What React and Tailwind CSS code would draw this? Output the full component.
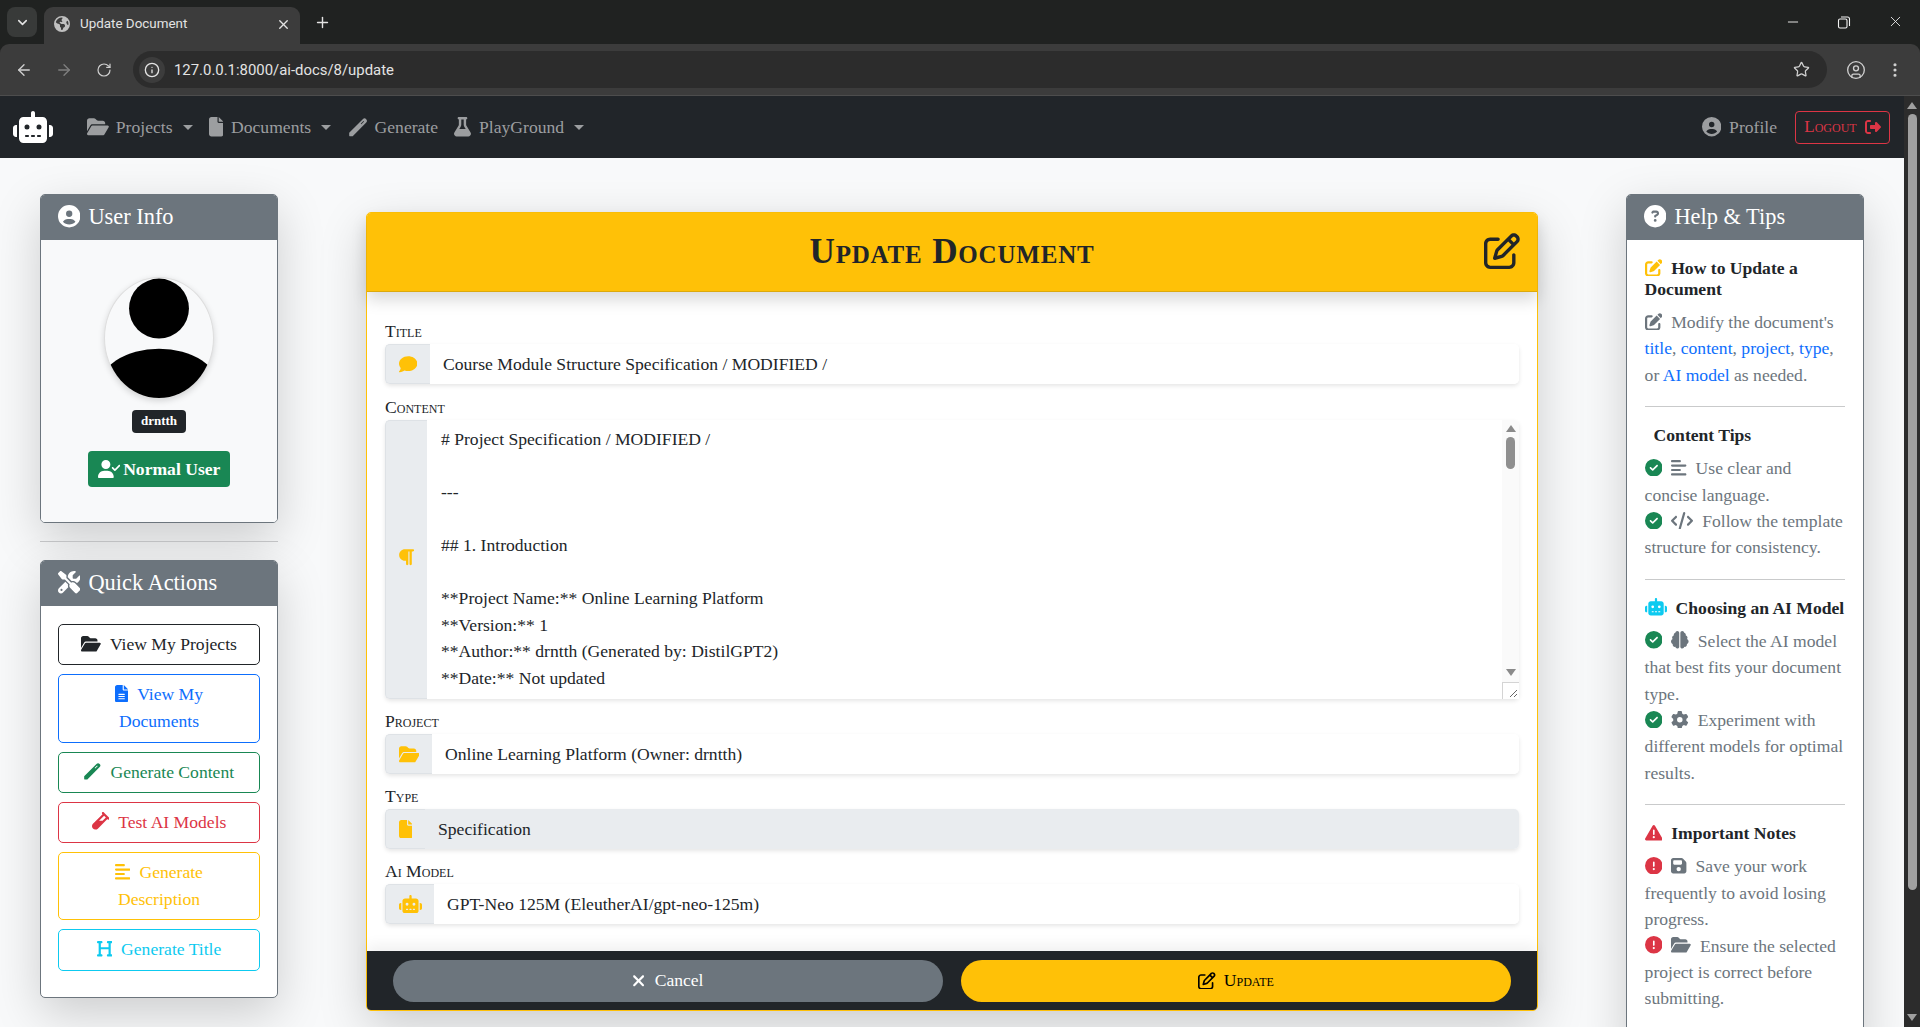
import React from 'react';
import clsx from 'clsx';
import { ArrowLeft, ArrowRight, RotateCw, Star, X, Plus, Minus, ChevronDown, Info, CircleUser, EllipsisVertical } from 'lucide-react';
import {
    FaRobot, FaFolderOpen, FaFile, FaFileLines, FaFlask, FaCircleUser, FaRightFromBracket,
    FaScrewdriverWrench, FaUserCheck, FaVial, FaAlignLeft, FaHeading, FaCircleQuestion, FaPenToSquare,
    FaRegPenToSquare, FaCircleCheck, FaCode, FaBrain, FaGear, FaTriangleExclamation, FaCircleExclamation,
    FaFloppyDisk, FaComment, FaParagraph, FaXmark, FaEarthAmericas,
} from 'react-icons/fa6';

// the pen in the reference is a plain rod with a slit, no package has it
function PenRod({ className }) {
    return (
        <svg viewBox="0 0 20 20" fill="currentColor" fillRule="evenodd" className={className}>
            <path d="M0.2 16.2L14.2 2.2Q16 .4 17.8 2.2Q19.6 4 17.8 5.8L3.8 19.8L0.6 19.8L0.2 19.4ZM12.1 6.9L14.9 4.1L15.5 4.7L12.7 7.5Z" />
        </svg>
    );
}

// glyph widths, the svg box has to follow them or wide icons come out small
const iconWidths = new Map([
    [FaFolderOpen, 'w-[1.125em]'],
    [FaRobot, 'w-[1.25em]'],
    [FaFile, 'w-[.75em]'],
    [FaFileLines, 'w-[.75em]'],
    [FaFlask, 'w-[.875em]'],
    [FaUserCheck, 'w-[1.25em]'],
    [FaAlignLeft, 'w-[.875em]'],
    [FaHeading, 'w-[.875em]'],
    [FaCode, 'w-[1.25em]'],
    [FaFloppyDisk, 'w-[.875em]'],
    [FaParagraph, 'w-[.875em]'],
    [FaXmark, 'w-[.75em]'],
]);

function Ic({ icon: Icon, className }) {
    return <Icon className={clsx('inline-block h-[1em] align-[-0.125em]', iconWidths.get(Icon) || 'w-[1em]', className)} />;
}

function BrowserBar() {
    return (
        <div className="h-[96px] shrink-0 bg-[#202221] flex flex-col font-['Roboto',sans-serif]">
            <div className="h-[44px] flex items-end pl-[7px] pr-[6px] relative">
                <div className="w-[30px] h-[30px] mb-[7px] rounded-lg bg-[#383a39] flex items-center justify-center text-[#e3e3e3]">
                    <ChevronDown size={15} strokeWidth={2.5} />
                </div>
                <div className="ml-[7px] w-[256px] h-[37px] bg-[#3c3c3c] rounded-t-[9px] flex items-center pl-[10px] pr-[9px] pb-[3px] text-[13.4px] text-[#e3e3e3]">
                    <FaEarthAmericas className="w-4 h-4 text-[#c0c0c0]" />
                    <span className="ml-[10px] flex-1">Update Document</span>
                    <X size={15} strokeWidth={2.2} />
                </div>
                <div className="ml-[14px] mb-[13px] text-[#e3e3e3]"><Plus size={17} strokeWidth={2} /></div>
                <div className="ml-auto mb-[14px] flex items-center gap-[35px] pr-[10px] text-[#f2f2f2]">
                    <Minus size={16} strokeWidth={1.4} />
                    <svg width="16" height="16" viewBox="0 0 16 16" fill="none" stroke="currentColor" strokeWidth="1.1">
                        <rect x="2.5" y="5" width="8.5" height="9" rx="1.5" />
                        <path d="M5 3h6.5A2 2 0 0 1 13.5 5v7" />
                    </svg>
                    <X size={17} strokeWidth={1.2} />
                </div>
            </div>
            <div className="h-[52px] bg-[#3c3c3c] rounded-t-[9px] border-b border-[#4d4d4d] flex items-center text-[#d0d0d0]">
                <div className="w-[133px] flex items-center pl-[15px] gap-[22px]">
                    <ArrowLeft size={18} strokeWidth={1.8} />
                    <ArrowRight size={18} strokeWidth={1.8} className="text-[#7f7f7f]" />
                    <RotateCw size={16} strokeWidth={1.8} className="ml-[1px]" />
                </div>
                <div className="w-[1694px] h-[37px] rounded-full bg-[#2c2c2c] flex items-center pl-[6px] pr-[17px]">
                    <div className="w-[26px] h-[26px] rounded-full bg-[#3c3c3c] flex items-center justify-center text-[#e3e3e3]">
                        <Info size={16} strokeWidth={2} />
                    </div>
                    <span className="ml-[9px] pt-[1px] text-[14.9px] text-[#e3e3e3]">127.0.0.1:8000/ai-docs/8/update</span>
                    <Star size={17} strokeWidth={1.8} className="ml-auto" />
                </div>
                <CircleUser size={20} strokeWidth={1.6} className="ml-[19px]" />
                <EllipsisVertical size={18} strokeWidth={2.2} className="ml-[20px]" />
            </div>
        </div>
    );
}

function NavItem({ icon, label, caret, className, iconGap = 'mr-[7px]' }) {
    return (
        <div className={clsx('flex items-center text-[#9c9ea0]', className)}>
            <Ic icon={icon} className={clsx('text-[19.4px]', iconGap)} />
            <span>{label}</span>
            {caret && <span className="ml-[10px] w-0 h-0 border-x-[5px] border-x-transparent border-t-[5px] border-t-[#9c9ea0]"></span>}
        </div>
    );
}

function Navbar() {
    return (
        <div className="h-[62px] shrink-0 bg-[#212529] flex items-center pl-[13px] pr-[14px]">
            <Ic icon={FaRobot} className="text-[32px] text-white" />
            <NavItem icon={FaFolderOpen} label="Projects" caret className="ml-[34px]" />
            <NavItem icon={FaFile} label="Documents" caret className="ml-[16px]" iconGap="mr-[8px]" />
            <NavItem icon={PenRod} label="Generate" className="ml-[18px]" iconGap="mr-[6px]" />
            <NavItem icon={FaFlask} label="PlayGround" caret className="ml-[16px]" iconGap="mr-[8px]" />
            <NavItem icon={FaCircleUser} label="Profile" className="ml-auto" iconGap="mr-[8px]" />
            <div className="ml-[18px] h-[33px] w-[95px] border border-[#dc3545] rounded flex items-center justify-center text-[17px] text-[#dc3545] [font-variant-caps:small-caps]">
                Logout
                <Ic icon={FaRightFromBracket} className="ml-[8px] text-[16px]" />
            </div>
        </div>
    );
}

function SideCard({ icon, title, bodyClass, children }) {
    return (
        <div className="border border-[#6c757d] rounded-[5px] overflow-hidden shadow-[0_16px_48px_rgba(0,0,0,.175)] bg-white">
            <div className="h-[45px] bg-[#6c757d] text-white text-[22.4px] leading-[26px] flex items-center pl-[17px] pb-[2px]">
                <Ic icon={icon} className="mr-[8px] text-[22.4px]" />
                <span>{title}</span>
            </div>
            <div className={bodyClass}>{children}</div>
        </div>
    );
}

function UserInfo() {
    return (
        <SideCard icon={FaCircleUser} title="User Info" bodyClass="bg-[#f8f9fa] h-[282px] flex flex-col items-center pt-[37px]">
            <div className="w-[110px] h-[122px] rounded-[50%] border border-[#dedede] shadow-[0_2px_6px_rgba(0,0,0,.15)] overflow-hidden bg-[#f8f9fa]">
                <svg viewBox="0 0 110 122" className="w-full h-full">
                    <circle cx="55" cy="31" r="30.5" fill="#000" />
                    <ellipse cx="55" cy="113" rx="62" ry="41" fill="#000" />
                </svg>
            </div>
            <div className="mt-[11px] h-[23px] w-[54px] rounded bg-[#212529] text-white text-[13px] font-bold flex items-center justify-center">drntth</div>
            <div className="mt-[18px] h-[36px] w-[142px] rounded bg-[#198754] text-white font-bold flex items-center justify-center">
                <Ic icon={FaUserCheck} className="mr-[3px] text-[18px]" />
                Normal User
            </div>
        </SideCard>
    );
}

const quickActions = [
    { icon: FaFolderOpen, label: 'View My Projects', cls: 'border-[#212529] text-[#212529]' },
    { icon: FaFileLines, label: 'View My Documents', cls: 'border-[#0d6efd] text-[#0d6efd]' },
    { icon: PenRod, label: 'Generate Content', cls: 'border-[#198754] text-[#198754]' },
    { icon: FaVial, label: 'Test AI Models', cls: 'border-[#dc3545] text-[#dc3545]' },
    { icon: FaAlignLeft, label: 'Generate Description', cls: 'border-[#ffc107] text-[#ffc107]' },
    { icon: FaHeading, label: 'Generate Title', cls: 'border-[#0dcaf0] text-[#0dcaf0]' },
];

function QuickActions() {
    return (
        <SideCard icon={FaScrewdriverWrench} title="Quick Actions" bodyClass="px-[17px] pt-[18px] pb-[26px] flex flex-col gap-[9px]">
            {quickActions.map(a => (
                <div key={a.label} className={clsx('border rounded-[5px] px-[17px] py-[6px] text-center leading-[27.2px]', a.cls)}>
                    <Ic icon={a.icon} className="mr-[9px]" />
                    {a.label}
                </div>
            ))}
        </SideCard>
    );
}

function Field({ label, icon, addon, children, className, mb = 'mb-[9px]' }) {
    return (
        <div className={mb}>
            <div className="h-[26px] leading-[26px] text-[#212529] [font-variant-caps:small-caps]">{label}</div>
            <div className="flex h-[40px] rounded-[5px] shadow-[0_2px_4px_rgba(0,0,0,.1)]">
                <div className={clsx('shrink-0 flex items-center justify-center bg-[#e9ecef] border border-r-0 border-[#dee2e6] rounded-l-[5px] text-[#ffc107]', addon)}>
                    <Ic icon={icon} className="text-[18.4px]" />
                </div>
                <div className={clsx('flex-1 flex items-center pl-[13px] rounded-r-[5px] text-[#212529]', className)}>{children}</div>
            </div>
        </div>
    );
}

const contentLines = [
    '# Project Specification / MODIFIED /',
    '',
    '---',
    '',
    '## 1. Introduction',
    '',
    '**Project Name:** Online Learning Platform',
    '**Version:** 1',
    '**Author:** drntth (Generated by: DistilGPT2)',
    '**Date:** Not updated',
];

function ContentField() {
    return (
        <div className="mb-[9px]">
            <div className="h-[26px] leading-[26px] text-[#212529] [font-variant-caps:small-caps]">Content</div>
            <div className="flex h-[279px] rounded-[5px] shadow-[0_2px_4px_rgba(0,0,0,.1)]">
                <div className="w-[42px] shrink-0 flex items-center justify-center pb-[4px] bg-[#e9ecef] border border-r-0 border-[#dee2e6] rounded-l-[5px] text-[#ffc107]">
                    <Ic icon={FaParagraph} className="text-[18.4px]" />
                </div>
                <div className="flex-1 pl-[14px] pt-[6px] text-[#212529] overflow-hidden">
                    {contentLines.map((line, i) => (
                        <div key={i} className="h-[26.5px] whitespace-pre">{line}</div>
                    ))}
                </div>
                <div className="w-[17px] shrink-0 bg-[#fafafa] flex flex-col items-center pt-[5px] rounded-tr-[5px]">
                    <span className="w-0 h-0 border-x-[5px] border-x-transparent border-b-[7px] border-b-[#8a8a8a]"></span>
                    <span className="mt-[5px] w-[9px] h-[32px] rounded-full bg-[#8f8f8f]"></span>
                    <span className="mt-auto mb-[6px] w-0 h-0 border-x-[5px] border-x-transparent border-t-[7px] border-t-[#8a8a8a]"></span>
                    <span className="w-[17px] h-[17px] bg-white border-l border-t border-[#d4d4d4] flex items-end justify-end">
                        <svg width="12" height="12" viewBox="0 0 12 12" stroke="#666" strokeWidth="1"><path d="M3 10l7-7M7 10l3-3" /></svg>
                    </span>
                </div>
            </div>
        </div>
    );
}

function UpdateCard() {
    return (
        <div className="flex-1 mt-[18px] h-[799px] border border-[#ffc107] rounded-[5px] bg-white shadow-[0_16px_48px_rgba(0,0,0,.175)] flex flex-col">
            <div className="relative z-10 h-[79px] shrink-0 bg-[#ffc107] border-b border-[#dca90c] rounded-t-[4px] shadow-[0_8px_16px_rgba(0,0,0,.15)] flex items-center justify-center text-[#212529]">
                <h1 className="text-[35.2px] font-bold tracking-[.8px] [font-variant-caps:small-caps]">Update Document</h1>
                <FaRegPenToSquare className="absolute right-[17px] top-[20px] w-[36px] h-[36px]" />
            </div>
            <div className="flex-1 px-[18px] pt-[26px]">
                <Field label="Title" icon={FaComment} addon="w-[45px]" mb="mb-[10px]" className="bg-white">Course Module Structure Specification / MODIFIED /</Field>
                <ContentField />
                <Field label="Project" icon={FaFolderOpen} addon="w-[47px]" className="bg-white">Online Learning Platform (Owner: drntth)</Field>
                <Field label="Type" icon={FaFile} addon="w-[40px]" className="bg-[#e9ecef]">Specification</Field>
                <Field label="Ai Model" icon={FaRobot} addon="w-[49px]" className="bg-white">GPT-Neo 125M (EleutherAI/gpt-neo-125m)</Field>
            </div>
            <div className="relative h-[59px] shrink-0 bg-[#212529] rounded-b-[4px] shadow-[0_-6px_14px_rgba(0,0,0,.06)] flex items-center gap-[18px] px-[26px]">
                <div className="flex-1 h-[42px] rounded-full bg-[#6c757d] text-white flex items-center justify-center">
                    <Ic icon={FaXmark} className="mr-[9px]" />
                    Cancel
                </div>
                <div className="flex-1 h-[42px] rounded-full bg-[#ffc107] text-black flex items-center justify-center [font-variant-caps:small-caps]">
                    <Ic icon={FaRegPenToSquare} className="mr-[8px]" />
                    Update
                </div>
            </div>
        </div>
    );
}

function Tip({ mark, markCls, icon, children }) {
    return (
        <div className="text-[#6c757d]">
            <Ic icon={mark} className={clsx('mr-[9px]', markCls)} />
            <Ic icon={icon} className="mr-[9px]" />
            {children}
        </div>
    );
}

function Heading({ icon, iconCls, children, className }) {
    return (
        <div className={clsx('font-bold leading-[21px] text-[#212529] mb-[9px]', className)}>
            {icon && <Ic icon={icon} className={clsx('mr-[9px]', iconCls)} />}
            {children}
        </div>
    );
}

const Sep = () => <div className="my-[18px] border-t border-[#c9cacb]"></div>;
const Link = ({ children }) => <span className="text-[#0d6efd]">{children}</span>;

function HelpCard() {
    const ok = { mark: FaCircleCheck, markCls: 'text-[#198754]' };
    const bad = { mark: FaCircleExclamation, markCls: 'text-[#dc3545]' };
    return (
        <SideCard icon={FaCircleQuestion} title="Help & Tips" bodyClass="px-[17.6px] pt-[18px] pb-[40px] bg-white">
            <Heading icon={FaPenToSquare} iconCls="text-[#ffc107]">How to Update a Document</Heading>
            <div className="text-[#6c757d]">
                <Ic icon={FaPenToSquare} className="mr-[9px]" />
                Modify the document's <Link>title</Link>, <Link>content</Link>, <Link>project</Link>, <Link>type</Link>, or <Link>AI model</Link> as needed.
            </div>
            <Sep />
            <Heading className="pl-[9px]">Content Tips</Heading>
            <Tip {...ok} icon={FaAlignLeft}>Use clear and concise language.</Tip>
            <Tip {...ok} icon={FaCode}>Follow the template structure for consistency.</Tip>
            <Sep />
            <Heading icon={FaRobot} iconCls="text-[#0dcaf0]">Choosing an AI Model</Heading>
            <Tip {...ok} icon={FaBrain}>Select the AI model that best fits your document type.</Tip>
            <Tip {...ok} icon={FaGear}>Experiment with different models for optimal results.</Tip>
            <Sep />
            <Heading icon={FaTriangleExclamation} iconCls="text-[#dc3545]">Important Notes</Heading>
            <Tip {...bad} icon={FaFloppyDisk}>Save your work frequently to avoid losing progress.</Tip>
            <Tip {...bad} icon={FaFolderOpen}>Ensure the selected project is correct before submitting.</Tip>
        </SideCard>
    );
}

function PageScrollbar() {
    return (
        <div className="w-[16px] shrink-0 bg-[#2c2c2c] flex flex-col items-center pt-[6px] pb-[6px]">
            <span className="w-0 h-0 border-x-[5px] border-x-transparent border-b-[7px] border-b-[#a0a0a0]"></span>
            <span className="mt-[5px] w-[9px] h-[776px] rounded-full bg-[#a0a0a0]"></span>
            <span className="mt-auto w-0 h-0 border-x-[5px] border-x-transparent border-t-[7px] border-t-[#a0a0a0]"></span>
        </div>
    );
}

export default function App() {
    return (
        <div className="h-screen overflow-hidden flex flex-col font-['Liberation_Serif',serif] text-[17.6px] leading-[26.4px]">
            <BrowserBar />
            <div className="flex-1 min-h-0 flex">
                <div className="flex-1 min-w-0 flex flex-col bg-[#f8f9fa]">
                    <Navbar />
                    <div className="flex-1 min-h-0 overflow-hidden flex items-start gap-[88px] pl-[40px] pr-[40px] pt-[36px]">
                        <div className="w-[238px] shrink-0">
                            <UserInfo />
                            <div className="my-[18px] border-t border-[#c2c3c5]"></div>
                            <QuickActions />
                        </div>
                        <UpdateCard />
                        <div className="w-[238px] shrink-0">
                            <HelpCard />
                        </div>
                    </div>
                </div>
                <PageScrollbar />
            </div>
        </div>
    );
}
